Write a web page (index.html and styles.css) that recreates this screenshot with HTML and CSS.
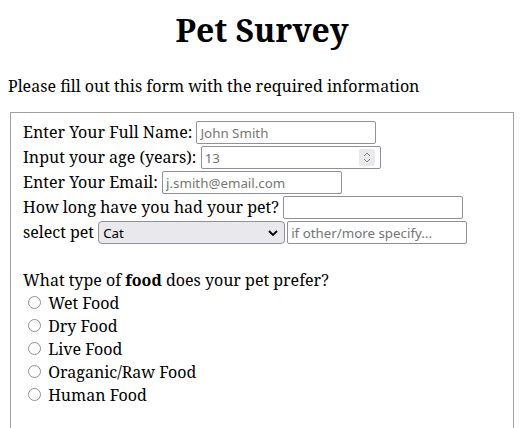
FILE: index.html
```html
<!DOCTYPE html>
<html>
<head>
<meta charset="utf-8">
<title>Pet Survey</title>
<link rel="stylesheet" href="styles.css">
</head>
<body>
<h1 class="title">Pet Survey</h1>
<p class="intro">Please fill out this form with the required information</p>
<form class="survey">
<fieldset class="box">
<div class="rows">
<label for="name">Enter Your Full Name:</label> <input class="field" id="name" type="text" placeholder="John Smith"><br>
<label for="age">Input your age (years):</label> <input class="field age" id="age" type="number" placeholder="13"><br>
<label for="email">Enter Your Email:</label> <input class="field" id="email" type="email" placeholder="j.smith@email.com"><br>
<label for="time">How long have you had your pet?</label> <input class="field" id="time" type="text"><br>
<label for="pet">select pet</label> <select id="pet" class="pet"><option>Cat</option><option>Dog</option><option>Other</option></select><input class="field other" type="text" placeholder="if other/more specify...">
</div>
<p class="question">What type of <b>food</b> does your pet prefer?</p>
<div class="options">
<input class="radio" type="radio" name="food" id="f1"> <label for="f1">Wet Food</label><br>
<input class="radio" type="radio" name="food" id="f2"> <label for="f2">Dry Food</label><br>
<input class="radio" type="radio" name="food" id="f3"> <label for="f3">Live Food</label><br>
<input class="radio" type="radio" name="food" id="f4"> <label for="f4">Oraganic/Raw Food</label><br>
<input class="radio" type="radio" name="food" id="f5"> <label for="f5">Human Food</label>
</div>
</fieldset>
</form>
</body>
</html>
```
FILE: styles.css
```css
body {
  font-family: "Noto Serif", "DejaVu Serif", serif;
  font-size: 16px;
  color: #000;
}
.title {
  text-align: center;
  margin: 0;
}
.intro {
  margin: 24px 0 15px;
}
.box {
  border: 1px solid #a0a0a0;
  margin: 0 2px;
  padding: 7px 12px 60px;
}
.field {
  font-family: "Noto Sans", sans-serif;
  font-size: 13.33px;
  box-sizing: border-box;
  width: 180px;
  height: 23px;
  margin: 1px 0;
  padding: 1px 3px;
  border: 1px solid #8f8f9d;
  border-radius: 2px;
  color: #000;
  background: #fff;
}
.field::placeholder {
  color: #757575;
}
.age::-webkit-inner-spin-button {
  -webkit-appearance: none;
  appearance: none;
  opacity: 1;
  width: 16px;
  height: 17px;
  margin: 0 2px 0 0;
  border-radius: 2px;
  background: #e9e9ed url("data:image/svg+xml,%3Csvg xmlns='http://www.w3.org/2000/svg' width='16' height='17' viewBox='0 0 16 17'%3E%3Cpath d='M5 7 L8 4 L11 7 M5 10 L8 13 L11 10' fill='none' stroke='%23808080' stroke-width='1'/%3E%3C/svg%3E") no-repeat center;
}
.pet {
  appearance: none;
  -webkit-appearance: none;
  font-family: "Noto Sans", sans-serif;
  font-size: 13.33px;
  box-sizing: border-box;
  width: 187px;
  height: 23px;
  margin: 1px 0;
  padding: 1px 4px;
  border: 1px solid #8f8f9d;
  border-radius: 4px;
  color: #000;
  background: #e9e9ed url("data:image/svg+xml,%3Csvg xmlns='http://www.w3.org/2000/svg' width='10' height='6' viewBox='0 0 10 6'%3E%3Cpath d='M1 1 L5 5 L9 1' fill='none' stroke='%23000' stroke-width='1.8'/%3E%3C/svg%3E") no-repeat right 6px center;
}
.other {
  margin-left: 2px;
}
.question {
  margin: 24px 0 0;
}
.options {
  margin-top: 1px;
  line-height: 23px;
}
.radio {
  appearance: none;
  -webkit-appearance: none;
  box-sizing: border-box;
  width: 13px;
  height: 13px;
  margin: 3px 3px 0 5px;
  border: 1.5px solid #8f8f9d;
  border-radius: 50%;
  background: #fff;
}
```
